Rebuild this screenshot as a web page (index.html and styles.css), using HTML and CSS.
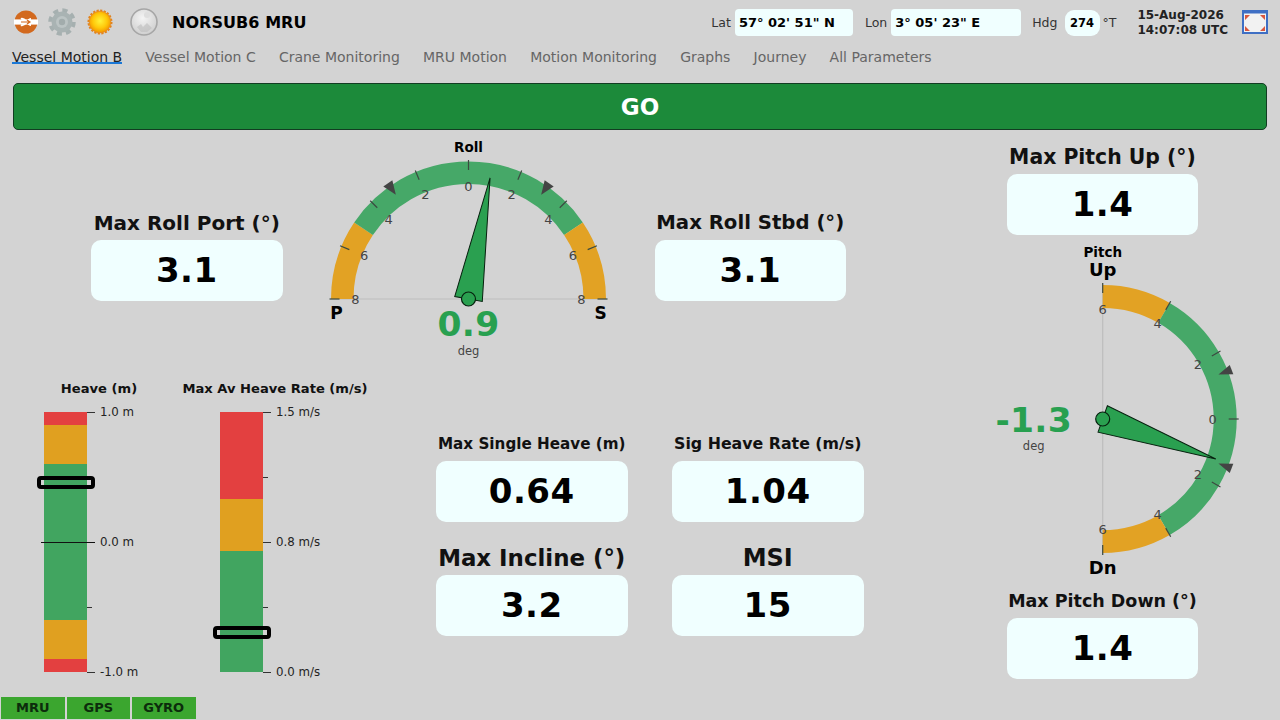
FILE: index.html
```html
<!doctype html>
<html>
<head>
  <meta charset="utf-8">
  <meta name="viewport" content="width=device-width, initial-scale=1">
  <title>NORSUB6 MRU</title>
  <link rel="stylesheet" href="styles.css">
</head>
<body>

  <header class="topbar">
    <div class="icons">
      <svg class="icon" viewBox="-14 -14 28 28">
        <circle r="11.5" fill="#d2691e"/>
        <rect x="-12" y="-2.6" width="24" height="5.2" fill="#fff"/>
        <path d="M-5 -3 C-1 -5 1 3 5 3 M-5 3 C-1 5 1 -3 5 -3" fill="none" stroke="#fff" stroke-width="2"/>
        <path d="M-5 0 H4 M1 -2 L4 0 L1 2" fill="none" stroke="#d2691e" stroke-width="1.2"/>
      </svg>
      <svg class="icon" viewBox="-14 -14 28 28">
        <circle r="11.5" fill="none" stroke="#a6b0b0" stroke-width="4.5" stroke-dasharray="5 4.03"/>
        <circle r="10.5" fill="#a9b3b3"/>
        <circle r="6" fill="#bcc4c4"/>
        <circle r="3.2" fill="#a2acac"/>
      </svg>
      <svg class="icon icon-sun" viewBox="-14 -14 28 28">
        <defs>
          <radialGradient id="sun" cx="50%" cy="45%" r="55%">
            <stop offset="0" stop-color="#fff23a"/>
            <stop offset="0.6" stop-color="#ffc80a"/>
            <stop offset="1" stop-color="#f29400"/>
          </radialGradient>
          <radialGradient id="moon" cx="45%" cy="35%" r="65%">
            <stop offset="0" stop-color="#f4f4f4"/>
            <stop offset="1" stop-color="#cfcfcf"/>
          </radialGradient>
        </defs>
        <circle r="11.5" fill="none" stroke="#e08420" stroke-width="2" stroke-dasharray="2.2 1.4"/>
        <circle r="10.8" fill="url(#sun)" stroke="#e8861a" stroke-width="0.8"/>
      </svg>
      <svg class="icon icon-moon" viewBox="-14 -14 28 28">
        <circle r="13" fill="url(#moon)" stroke="#a6a6a6" stroke-width="1.6"/>
        <path d="M-7 5 L-3 2 L-1 5 L3 1 L8 6 L3 10 L-3 10 Z" fill="#bdbdbd" opacity="0.6"/>
        <circle cx="3" cy="-7" r="3" fill="#dedede"/>
      </svg>
    </div>
    <div class="title">NORSUB6 MRU</div>

    <div class="nav-info">
      <span class="info-label">Lat</span>
      <span class="info-box info-lat">57° 02' 51" N</span>
      <span class="info-label info-lon-label">Lon</span>
      <span class="info-box info-lon">3° 05' 23" E</span>
      <span class="info-label info-hdg-label">Hdg</span>
      <span class="info-box info-hdg">274</span>
      <span class="info-label">°T</span>
    </div>
    <div class="clock">15-Aug-2026<br>14:07:08 UTC</div>
    <svg class="fullscreen" viewBox="0 0 28 26">
      <rect x="1" y="1" width="26" height="24" fill="#3f6fc4"/>
      <rect x="3" y="4.5" width="22" height="18.5" fill="#f2f2f2"/>
      <path d="M4 6 H9 L4 11 Z M24 6 H19 L24 11 Z M4 22 H9 L4 17 Z M24 22 H19 L24 17 Z" fill="#d9583f"/>
    </svg>
  </header>

  <nav class="tabs">
    <a class="tab active">Vessel Motion B</a>
    <a class="tab">Vessel Motion C</a>
    <a class="tab">Crane Monitoring</a>
    <a class="tab">MRU Motion</a>
    <a class="tab">Motion Monitoring</a>
    <a class="tab">Graphs</a>
    <a class="tab">Journey</a>
    <a class="tab">All Parameters</a>
  </nav>

  <div class="go">GO</div>

  <main class="content">
    <div class="left">

      <section class="roll-row">
        <div class="stat roll-stat">
          <div class="stat-label">Max Roll Port (°)</div>
          <div class="stat-value">3.1</div>
        </div>

        <svg class="roll-gauge" viewBox="0 0 280 235">
          <g transform="translate(139.5 164)">
            <path class="base" d="M-138 0 H139"/>
            <path class="arc arc-amber" d="M-126.25 0 A126.25 126.25 0 0 1 -104.97 -70.14"/>
            <path class="arc arc-green" d="M-104.97 -70.14 A126.25 126.25 0 0 1 104.97 -70.14"/>
            <path class="arc arc-amber" d="M104.97 -70.14 A126.25 126.25 0 0 1 126.25 0"/>

            <path class="tick" transform="rotate(-90)" d="M0 -139 V-129"/>
            <path class="tick" transform="rotate(-67.5)" d="M0 -139 V-129"/>
            <path class="tick" transform="rotate(-45)" d="M0 -139 V-129"/>
            <path class="tick" transform="rotate(-22.5)" d="M0 -139 V-129"/>
            <path class="tick" d="M0 -139 V-129"/>
            <path class="tick" transform="rotate(22.5)" d="M0 -139 V-129"/>
            <path class="tick" transform="rotate(45)" d="M0 -139 V-129"/>
            <path class="tick" transform="rotate(67.5)" d="M0 -139 V-129"/>
            <path class="tick" transform="rotate(90)" d="M0 -139 V-129"/>

            <polygon class="limit" transform="rotate(-34.9)" points="0,-127 -5.5,-141 5.5,-141"/>
            <polygon class="limit" transform="rotate(34.9)" points="0,-127 -5.5,-141 5.5,-141"/>

            <text class="num" x="-113" y="0">8</text>
            <text class="num" x="-104.4" y="-43.2">6</text>
            <text class="num" x="-79.9" y="-79.9">4</text>
            <text class="num" x="-43.2" y="-104.4">2</text>
            <text class="num" x="0" y="-113">0</text>
            <text class="num" x="43.2" y="-104.4">2</text>
            <text class="num" x="79.9" y="-79.9">4</text>
            <text class="num" x="104.4" y="-43.2">6</text>
            <text class="num" x="113" y="0">8</text>

            <polygon class="needle" transform="rotate(10.1)" points="0,-123 14,0 -14,0"/>
            <circle class="hub" r="7"/>

            <text class="gauge-title" x="0" y="-152">Roll</text>
            <text class="gauge-end end-roll" x="-132" y="14">P</text>
            <text class="gauge-end end-roll" x="132" y="14">S</text>
            <text class="gauge-value" x="0" y="25">0.9</text>
            <text class="gauge-unit" x="0" y="52">deg</text>
          </g>
        </svg>

        <div class="stat roll-stat">
          <div class="stat-label label-stbd">Max Roll Stbd (°)</div>
          <div class="stat-value">3.1</div>
        </div>
      </section>

      <section class="lower-row">
        <div class="bars">
          <div class="bar-col">
            <div class="bar-title">Heave (m)</div>
            <div class="bar">
              <div class="seg seg-red s5"></div>
              <div class="seg seg-amber s15"></div>
              <div class="seg seg-green s60"></div>
              <div class="seg seg-amber s15"></div>
              <div class="seg seg-red s5"></div>
              <i class="bar-tick major t0"></i>
              <i class="bar-tick minor t25"></i>
              <i class="bar-tick center t50"></i>
              <i class="bar-tick minor t75"></i>
              <i class="bar-tick major t100"></i>
              <span class="bar-text t0">1.0 m</span>
              <span class="bar-text t50">0.0 m</span>
              <span class="bar-text t100">-1.0 m</span>
              <div class="bar-marker heave-marker"></div>
            </div>
          </div>

          <div class="bar-col">
            <div class="bar-title">Max Av Heave Rate (m/s)</div>
            <div class="bar">
              <div class="seg seg-red s33"></div>
              <div class="seg seg-amber s20"></div>
              <div class="seg seg-green s47"></div>
              <i class="bar-tick major t0"></i>
              <i class="bar-tick minor t25"></i>
              <i class="bar-tick major t50"></i>
              <i class="bar-tick minor t75"></i>
              <i class="bar-tick major t100"></i>
              <span class="bar-text t0">1.5 m/s</span>
              <span class="bar-text t50">0.8 m/s</span>
              <span class="bar-text t100">0.0 m/s</span>
              <div class="bar-marker rate-marker"></div>
            </div>
          </div>
        </div>

        <div class="metrics">
          <div class="stat">
            <div class="stat-label label-single">Max Single Heave (m)</div>
            <div class="stat-value">0.64</div>
          </div>
          <div class="stat">
            <div class="stat-label label-sig">Sig Heave Rate (m/s)</div>
            <div class="stat-value">1.04</div>
          </div>
          <div class="stat">
            <div class="stat-label label-incline">Max Incline (°)</div>
            <div class="stat-value">3.2</div>
          </div>
          <div class="stat">
            <div class="stat-label label-msi">MSI</div>
            <div class="stat-value">15</div>
          </div>
        </div>
      </section>
    </div>

    <aside class="right">
      <div class="stat">
        <div class="stat-label label-up">Max Pitch Up (°)</div>
        <div class="stat-value">1.4</div>
      </div>

      <svg class="pitch-gauge" viewBox="0 0 275 348">
        <g transform="translate(137.7 179)">
          <path class="base" d="M0 -136 V136"/>
          <path class="arc arc-amber" d="M0 -122.5 A122.5 122.5 0 0 1 61.25 -106.09"/>
          <path class="arc arc-green" d="M61.25 -106.09 A122.5 122.5 0 0 1 61.25 106.09"/>
          <path class="arc arc-amber" d="M61.25 106.09 A122.5 122.5 0 0 1 0 122.5"/>

          <path class="tick" transform="rotate(-90)" d="M126 0 H136"/>
          <path class="tick" transform="rotate(-60)" d="M126 0 H136"/>
          <path class="tick" transform="rotate(-30)" d="M126 0 H136"/>
          <path class="tick" d="M126 0 H136"/>
          <path class="tick" transform="rotate(30)" d="M126 0 H136"/>
          <path class="tick" transform="rotate(60)" d="M126 0 H136"/>
          <path class="tick" transform="rotate(90)" d="M126 0 H136"/>

          <polygon class="limit" transform="rotate(-21)" points="124,0 138,-5 138,5"/>
          <polygon class="limit" transform="rotate(21)" points="124,0 138,-5 138,5"/>

          <text class="num" x="0" y="-110">6</text>
          <text class="num" x="55" y="-95.3">4</text>
          <text class="num" x="95.3" y="-55">2</text>
          <text class="num" x="110" y="0">0</text>
          <text class="num" x="95.3" y="55">2</text>
          <text class="num" x="55" y="95.3">4</text>
          <text class="num" x="0" y="110">6</text>

          <polygon class="needle" transform="rotate(19.5)" points="120,0 0,14 0,-14"/>
          <circle class="hub" r="7"/>

          <text class="gauge-title" x="0" y="-167">Pitch</text>
          <text class="gauge-end" x="0" y="-150">Up</text>
          <text class="gauge-end" x="0" y="148">Dn</text>
          <text class="gauge-value" x="-69" y="1">-1.3</text>
          <text class="gauge-unit" x="-69" y="27">deg</text>
        </g>
      </svg>

      <div class="stat">
        <div class="stat-label label-down">Max Pitch Down (°)</div>
        <div class="stat-value">1.4</div>
      </div>
    </aside>
  </main>

  <footer class="status">
    <div class="status-item">MRU</div>
    <div class="status-item">GPS</div>
    <div class="status-item">GYRO</div>
  </footer>

</body>
</html>
```

FILE: styles.css
```css
html, body {
  margin: 0;
  height: 100%;
}

body {
  width: 1280px;
  height: 720px;
  overflow: hidden;
  display: flex;
  flex-direction: column;
  background: #d3d3d3;
  color: #000;
  font-family: "DejaVu Sans", sans-serif;
}

/* top bar */
.topbar {
  height: 44px;
  display: flex;
  align-items: center;
  padding: 0 11px 0 12px;
  flex: none;
  box-sizing: border-box;
}

.icons {
  display: flex;
  align-items: center;
  gap: 8px;
}

.icon {
  width: 28px;
  height: 28px;
}

.icon-sun {
  margin-left: 2px;
}

.icon-moon {
  margin-left: 8px;
}

.title {
  margin-left: 14px;
  font-size: 16px;
  font-weight: bold;
  letter-spacing: 0.05px;
  white-space: nowrap;
}

.nav-info {
  margin-left: auto;
  margin-top: 1px;
  display: flex;
  align-items: center;
  font-size: 12.5px;
  color: #333;
}

.info-label {
  white-space: nowrap;
}

.info-box {
  box-sizing: border-box;
  height: 27px;
  line-height: 27px;
  margin-left: 4px;
  padding-left: 4px;
  background: #f0ffff;
  border-radius: 4px;
  color: #000;
  font-size: 13px;
  font-weight: bold;
  white-space: nowrap;
}

.info-lat {
  width: 118px;
}

.info-lon {
  width: 130px;
}

.info-lon-label {
  margin-left: 12px;
}

.info-hdg-label {
  margin-left: 11px;
}

.info-hdg {
  width: 35px;
  height: 26px;
  line-height: 26px;
  margin-left: 7px;
  margin-right: 3px;
  padding: 0;
  border-radius: 9px;
  text-align: center;
  font-size: 11.5px;
}

.clock {
  margin-left: 21px;
  margin-top: 1px;
  font-size: 12px;
  font-weight: bold;
  line-height: 15px;
  color: #222;
  white-space: nowrap;
}

.fullscreen {
  width: 28px;
  height: 26px;
  margin-left: 13px;
}

/* tabs */
.tabs {
  height: 26px;
  display: flex;
  gap: 23.2px;
  padding-left: 12px;
  flex: none;
  font-size: 14px;
  color: #666;
}

.tab {
  height: 18px;
  line-height: 26px;
  white-space: nowrap;
}

.tab.active {
  color: #222;
  border-bottom: 2px solid #1a78d6;
}

.go {
  flex: none;
  box-sizing: border-box;
  height: 47px;
  margin: 13px 13px 0;
  border: 1px solid #123d22;
  border-radius: 5px;
  background: #1c8a3a;
  color: #fff;
  font-size: 23px;
  font-weight: bold;
  line-height: 46px;
  text-align: center;
}

/* main area */
.content {
  flex: 1;
  display: flex;
  min-height: 0;
}

.left {
  width: 965px;
}

.right {
  width: 275px;
  padding-top: 14px;
  display: flex;
  flex-direction: column;
  align-items: center;
}

.stat {
  width: 191.5px;
  display: flex;
  flex-direction: column;
  align-items: center;
}

.stat-label {
  height: 24px;
  line-height: 26px;
  margin-bottom: 6px;
  font-size: 20px;
  font-weight: bold;
  white-space: nowrap;
  color: #111;
}

.label-stbd {
  font-size: 19.7px;
}

.label-single {
  font-size: 15.2px;
}

.label-sig {
  font-size: 15.8px;
}

.label-incline {
  font-size: 22.9px;
}

.label-msi {
  font-size: 24px;
}

.label-up {
  font-size: 20.4px;
}

.label-down {
  font-size: 17.5px;
}

.stat-value {
  width: 100%;
  height: 61px;
  line-height: 60px;
  border-radius: 10px;
  background: #f0ffff;
  text-align: center;
  font-size: 34px;
  font-weight: bold;
  letter-spacing: 0.5px;
}

/* roll */
.roll-row {
  height: 250px;
  padding-left: 91px;
  display: flex;
  align-items: flex-start;
}

.roll-stat {
  margin-top: 80px;
}

.roll-gauge {
  width: 280px;
  height: 235px;
  margin: 5px 46px 0;
}

.pitch-gauge {
  width: 275px;
  height: 348px;
  margin-top: 5px;
}

.base {
  stroke: #bdbdbd;
  stroke-width: 1.2;
  fill: none;
}

.arc {
  fill: none;
}

.roll-gauge .arc {
  stroke-width: 22.5;
}

.pitch-gauge .arc {
  stroke-width: 23;
}

.arc-green {
  stroke: #46a868;
}

.arc-amber {
  stroke: #e2a224;
}

.tick {
  stroke: #3c4a40;
  stroke-width: 1.2;
  fill: none;
}

.limit {
  fill: #444;
}

.num {
  font-size: 13px;
  fill: #444;
  text-anchor: middle;
  dominant-baseline: central;
}

.needle {
  fill: #2aa050;
  stroke: #07210f;
  stroke-width: 1;
}

.hub {
  fill: #2aa050;
  stroke: #07210f;
  stroke-width: 1.2;
}

.gauge-title {
  font-size: 13.5px;
  font-weight: bold;
  text-anchor: middle;
  dominant-baseline: central;
}

.gauge-end {
  font-size: 18px;
  font-weight: bold;
  text-anchor: middle;
  dominant-baseline: central;
}

.end-roll {
  font-size: 17px;
}

.gauge-value {
  font-size: 34.5px;
  font-weight: bold;
  letter-spacing: 0.3px;
  fill: #28a050;
  text-anchor: middle;
  dominant-baseline: central;
}

.gauge-unit {
  font-size: 11.5px;
  fill: #444;
  text-anchor: middle;
  dominant-baseline: central;
}

/* lower part */
.lower-row {
  display: flex;
  padding-left: 44px;
}

.bars {
  display: flex;
  gap: 66px;
}

.bar-col {
  width: 110px;
}

.bar-title {
  display: flex;
  justify-content: center;
  height: 16px;
  line-height: 18px;
  margin-bottom: 16px;
  font-size: 13.1px;
  font-weight: bold;
  white-space: nowrap;
  color: #111;
}

.bar {
  position: relative;
  width: 43px;
  height: 260px;
  display: flex;
  flex-direction: column;
}

.seg-red {
  background: #e34040;
}

.seg-amber {
  background: #e0a020;
}

.seg-green {
  background: #41a560;
}

.s5 { height: 5%; }
.s15 { height: 15%; }
.s20 { height: 20%; }
.s33 { height: 33.3%; }
.s47 { height: 46.7%; }
.s60 { height: 60%; }

.t0 { top: 0; }
.t25 { top: 25%; }
.t50 { top: 50%; }
.t75 { top: 75%; }
.t100 { top: 100%; }

.bar-tick {
  position: absolute;
  left: 100%;
  height: 1px;
  background: #333;
}

.bar-tick.major {
  width: 8px;
}

.bar-tick.minor {
  width: 5px;
}

.bar-tick.center {
  left: -3px;
  width: 54px;
  background: #111;
}

.bar-text {
  position: absolute;
  left: 56px;
  line-height: 14px;
  margin-top: -7px;
  font-size: 11.8px;
  color: #222;
  white-space: nowrap;
}

.bar-marker {
  position: absolute;
  left: -7.5px;
  width: 58px;
  height: 13px;
  box-sizing: border-box;
  border: 4px solid #000;
  border-radius: 4px;
}

.heave-marker {
  top: 63.5px;
}

.rate-marker {
  top: 214px;
}

.metrics {
  margin: 51px 0 0 106px;
  display: grid;
  grid-template-columns: 191.5px 191.5px;
  column-gap: 44.5px;
  row-gap: 23px;
  align-self: flex-start;
}

/* status */
.status {
  flex: none;
  height: 23px;
  padding-left: 1px;
  display: flex;
  gap: 2px;
}

.status-item {
  width: 63.5px;
  height: 21.5px;
  line-height: 21px;
  background: #3ba62f;
  text-align: center;
  font-size: 13px;
  font-weight: bold;
  color: #0c2c0c;
}
```
